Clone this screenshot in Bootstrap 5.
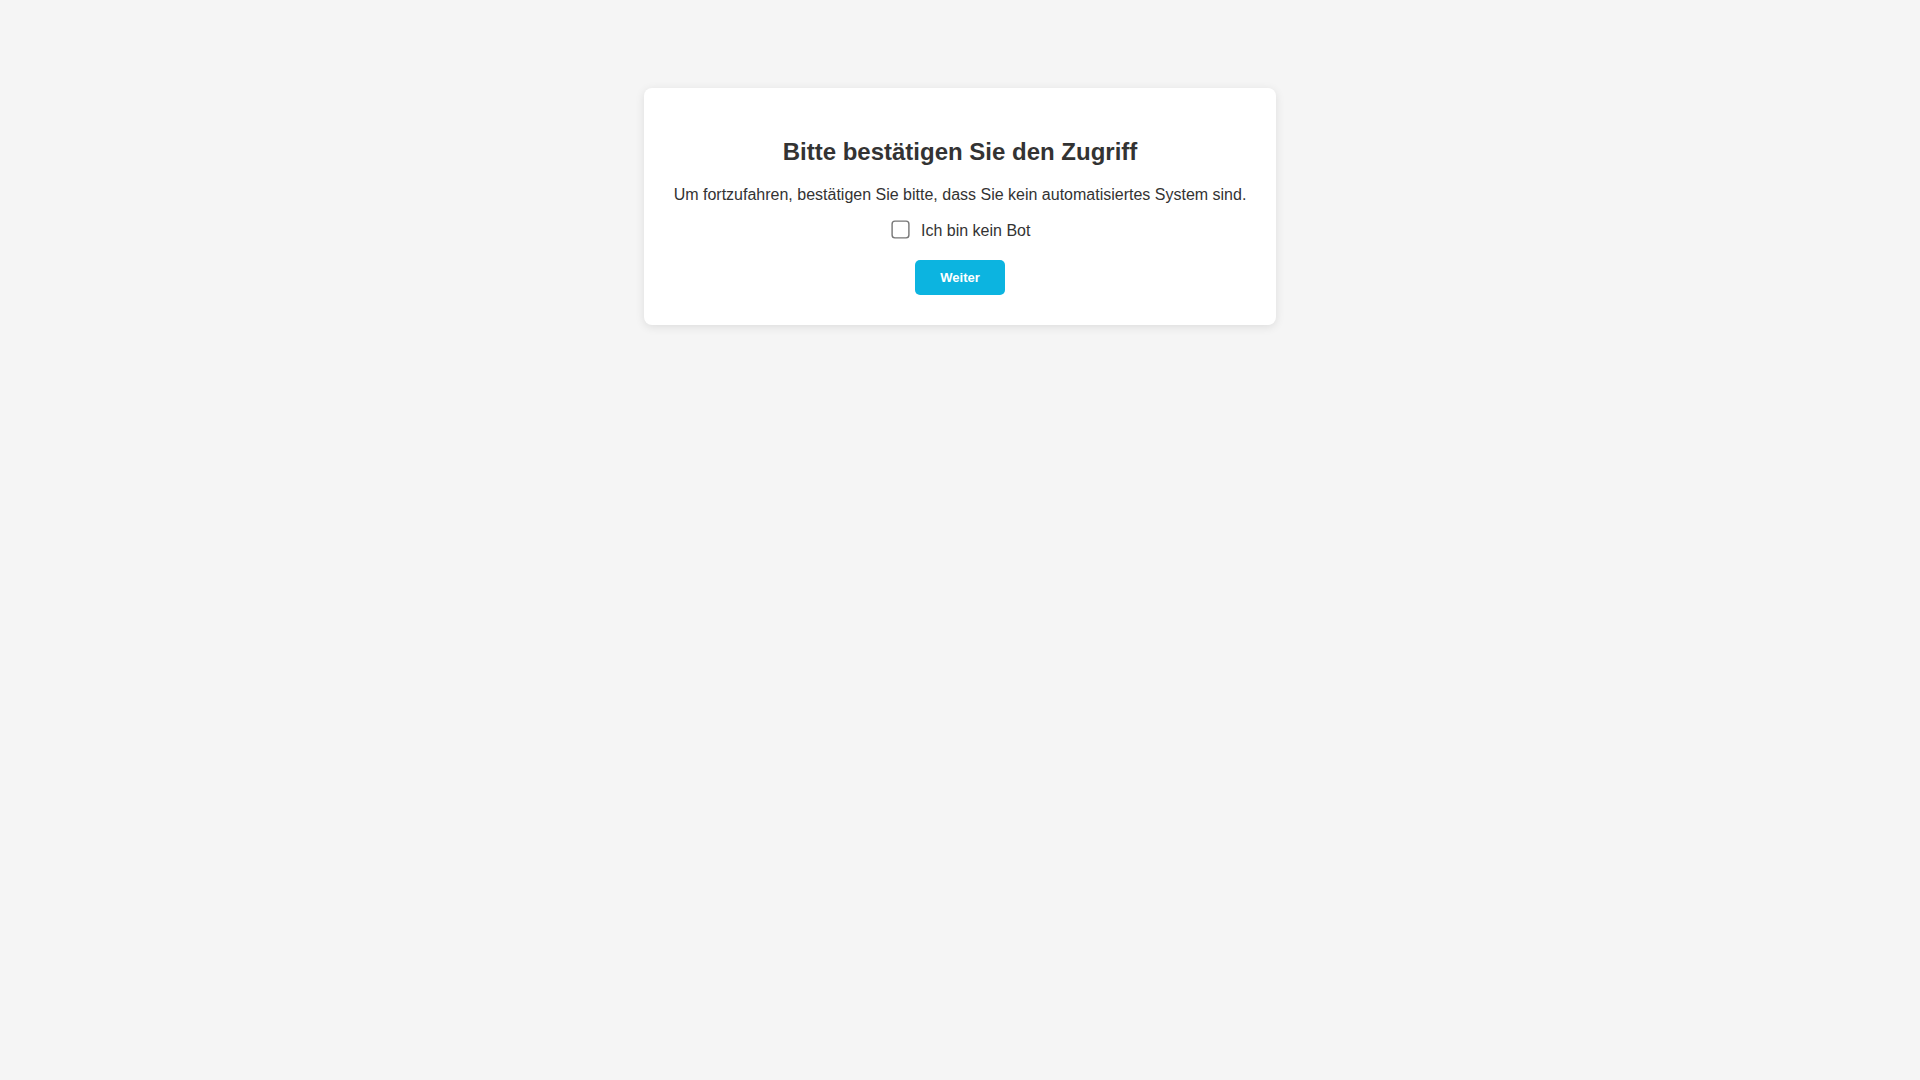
<!DOCTYPE html>
<html lang="de">
<head>
<meta charset="utf-8">
<meta name="viewport" content="width=device-width, initial-scale=1">
<title>Bitte bestätigen Sie den Zugriff</title>
<link href="https://cdn.jsdelivr.net/npm/bootstrap@5.3.0/dist/css/bootstrap.min.css" rel="stylesheet">
<style>
body { background: #f5f5f5; color: #333; font: 16px/18px "Liberation Sans", Arial, sans-serif; padding: 88px 0; }
.access-box { border-radius: 8px; padding: 30px; box-shadow: 0 2px 10px rgba(0, 0, 0, .1); }
.access-title { font-size: 24px; line-height: 28px; margin: 20px 0; }
.access-check { width: 13px; height: 13px; margin: 3px 10px 3px 4px; transform: scale(1.4); }
.access-row { margin-bottom: 20px; }
.access-btn { background: #0cb4e0; border-radius: 5px; padding: 10px 25px; font-size: 13px; line-height: 15px; }
.access-btn:hover { background: #099fc7; }
</style>
</head>
<body>
<main class="d-flex justify-content-center">
  <form class="access-box bg-white text-center">
    <h1 class="access-title fw-bold">Bitte bestätigen Sie den Zugriff</h1>
    <p class="mb-3">Um fortzufahren, bestätigen Sie bitte, dass Sie kein automatisiertes System sind.</p>
    <div class="access-row">
      <label class="d-inline" for="human"><input type="checkbox" id="human" class="access-check"> Ich bin kein Bot</label>
    </div>
    <button type="submit" class="access-btn d-block mx-auto border-0 text-white fw-bold">Weiter</button>
  </form>
</main>
<script src="https://cdn.jsdelivr.net/npm/bootstrap@5.3.0/dist/js/bootstrap.bundle.min.js"></script>
</body>
</html>
